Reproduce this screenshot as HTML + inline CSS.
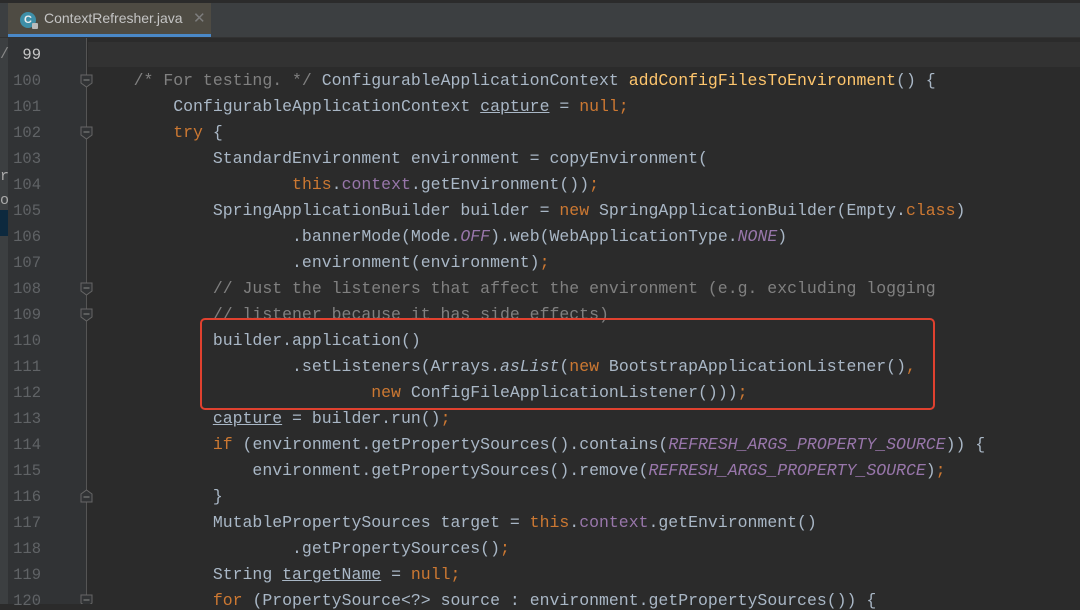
<!DOCTYPE html>
<html><head><meta charset="utf-8"><style>
html,body{margin:0;padding:0;width:1080px;height:604px;overflow:hidden;background:#2b2b2b;}
#top{position:absolute;left:0;top:0;width:1080px;height:3px;background:#2b2b2b;}
#bar{position:absolute;left:0;top:3px;width:1080px;height:34px;background:#3c3f41;border-bottom:1px solid #323232;}
#tab{position:absolute;left:8px;top:3px;width:203px;height:31px;background:#4e4b43;border-bottom:3px solid #4a88c7;}
#tab .ic{position:absolute;left:12px;top:9px;width:16px;height:16px;border-radius:50%;background:#3e8fa8;color:#eee;font:bold 11px "Liberation Sans",sans-serif;text-align:center;line-height:16px;}
#tab .lk{position:absolute;left:24px;top:20px;width:6px;height:6px;background:#bbb;border-radius:1px;}
#tab .t{position:absolute;left:36px;top:7px;font:14px "Liberation Sans",sans-serif;color:#c4c4c4;}
#tab .x{position:absolute;left:185px;top:6px;font:15px "Liberation Sans",sans-serif;color:#7d7d7d;}
#strip{position:absolute;left:0;top:38px;width:8px;height:566px;background:#3c3f41;}
#sel{position:absolute;left:0;top:210px;width:8px;height:26px;background:#0d293e;}
#gut{position:absolute;left:8px;top:38px;width:79px;height:566px;background:#313335;}
#fold{position:absolute;left:86px;top:38px;width:1px;height:566px;background:#555;}
#cur{position:absolute;left:88px;top:42px;width:992px;height:25px;background:#323232;}
.n{position:absolute;left:8px;width:33px;text-align:right;font:15.5px "Liberation Mono",monospace;color:#606366;}
.c{position:absolute;left:94px;white-space:pre;font:16.5px "Liberation Mono",monospace;color:#a9b7c6;}
.k{color:#cc7832}.m{color:#ffc66d}.cm{color:#808080}.f{color:#9876aa}.i{color:#9876aa;font-style:italic}.it{font-style:italic}.u{text-decoration:underline}
#box{position:absolute;left:200px;top:318px;width:731px;height:88px;border:2.5px solid #e0412f;border-radius:5px;}
</style></head><body>
<div id="top"></div><div id="bar"></div>
<div id="tab"><div class="ic">C</div><div class="lk"></div><div class="t">ContextRefresher.java</div><div class="x">✕</div></div>
<div id="strip"></div><div id="sel"></div>
<div id="gut"></div><div id="fold"></div><div id="cur"></div>
<div style="position:absolute;left:0;top:46px;font:15px 'Liberation Mono',monospace;color:#888">/</div>
<div style="position:absolute;left:0;top:168px;font:15px 'Liberation Mono',monospace;color:#aaa">r</div>
<div style="position:absolute;left:0;top:192px;font:15px 'Liberation Mono',monospace;color:#aaa">o</div>
<div class="n" style="top:46px;color:#c8c8c8">99</div>
<div class="n" style="top:72px">100</div><div class="n" style="top:98px">101</div><div class="n" style="top:124px">102</div><div class="n" style="top:150px">103</div><div class="n" style="top:176px">104</div><div class="n" style="top:202px">105</div><div class="n" style="top:228px">106</div><div class="n" style="top:254px">107</div><div class="n" style="top:280px">108</div><div class="n" style="top:306px">109</div><div class="n" style="top:332px">110</div><div class="n" style="top:358px">111</div><div class="n" style="top:384px">112</div><div class="n" style="top:410px">113</div><div class="n" style="top:436px">114</div><div class="n" style="top:462px">115</div><div class="n" style="top:488px">116</div><div class="n" style="top:514px">117</div><div class="n" style="top:540px">118</div><div class="n" style="top:566px">119</div><div class="n" style="top:592px">120</div>
<svg style="position:absolute;left:0;top:0" width="100" height="604">
<g fill="#313335" stroke="#666" stroke-width="1">
<path d="M81 75h11v8l-5.5 4l-5.5-4z"/><path d="M81 127h11v8l-5.5 4l-5.5-4z"/><path d="M81 283h11v8l-5.5 4l-5.5-4z"/><path d="M81 309h11v8l-5.5 4l-5.5-4z"/><path d="M81 595h11v8l-5.5 4l-5.5-4z"/>
<path d="M81 502h11v-8l-5.5-4l-5.5 4z"/>
</g>
<g stroke="#888" stroke-width="1"><path d="M83.5 80h6M83.5 132h6M83.5 288h6M83.5 314h6M83.5 497h6M83.5 600h6"/></g>
</svg>
<div class="c" style="top:71px">    <span class="cm">/* For testing. */</span> ConfigurableApplicationContext <span class="m">addConfigFilesToEnvironment</span>() {</div>
<div class="c" style="top:97px">        ConfigurableApplicationContext <span class="u">capture</span> = <span class="k">null;</span></div>
<div class="c" style="top:123px">        <span class="k">try</span> {</div>
<div class="c" style="top:149px">            StandardEnvironment environment = copyEnvironment(</div>
<div class="c" style="top:175px">                    <span class="k">this</span>.<span class="f">context</span>.getEnvironment())<span class="k">;</span></div>
<div class="c" style="top:201px">            SpringApplicationBuilder builder = <span class="k">new</span> SpringApplicationBuilder(Empty.<span class="k">class</span>)</div>
<div class="c" style="top:227px">                    .bannerMode(Mode.<span class="i">OFF</span>).web(WebApplicationType.<span class="i">NONE</span>)</div>
<div class="c" style="top:253px">                    .environment(environment)<span class="k">;</span></div>
<div class="c cm" style="top:279px">            // Just the listeners that affect the environment (e.g. excluding logging</div>
<div class="c cm" style="top:305px">            // listener because it has side effects)</div>
<div class="c" style="top:331px">            builder.application()</div>
<div class="c" style="top:357px">                    .setListeners(Arrays.<span class="it">asList</span>(<span class="k">new</span> BootstrapApplicationListener()<span class="k">,</span></div>
<div class="c" style="top:383px">                            <span class="k">new</span> ConfigFileApplicationListener()))<span class="k">;</span></div>
<div class="c" style="top:409px">            <span class="u">capture</span> = builder.run()<span class="k">;</span></div>
<div class="c" style="top:435px">            <span class="k">if</span> (environment.getPropertySources().contains(<span class="i">REFRESH_ARGS_PROPERTY_SOURCE</span>)) {</div>
<div class="c" style="top:461px">                environment.getPropertySources().remove(<span class="i">REFRESH_ARGS_PROPERTY_SOURCE</span>)<span class="k">;</span></div>
<div class="c" style="top:487px">            }</div>
<div class="c" style="top:513px">            MutablePropertySources target = <span class="k">this</span>.<span class="f">context</span>.getEnvironment()</div>
<div class="c" style="top:539px">                    .getPropertySources()<span class="k">;</span></div>
<div class="c" style="top:565px">            String <span class="u">targetName</span> = <span class="k">null;</span></div>
<div class="c" style="top:591px">            <span class="k">for</span> (PropertySource&lt;?&gt; source : environment.getPropertySources()) {</div>
<div id="box"></div>
</body></html>
